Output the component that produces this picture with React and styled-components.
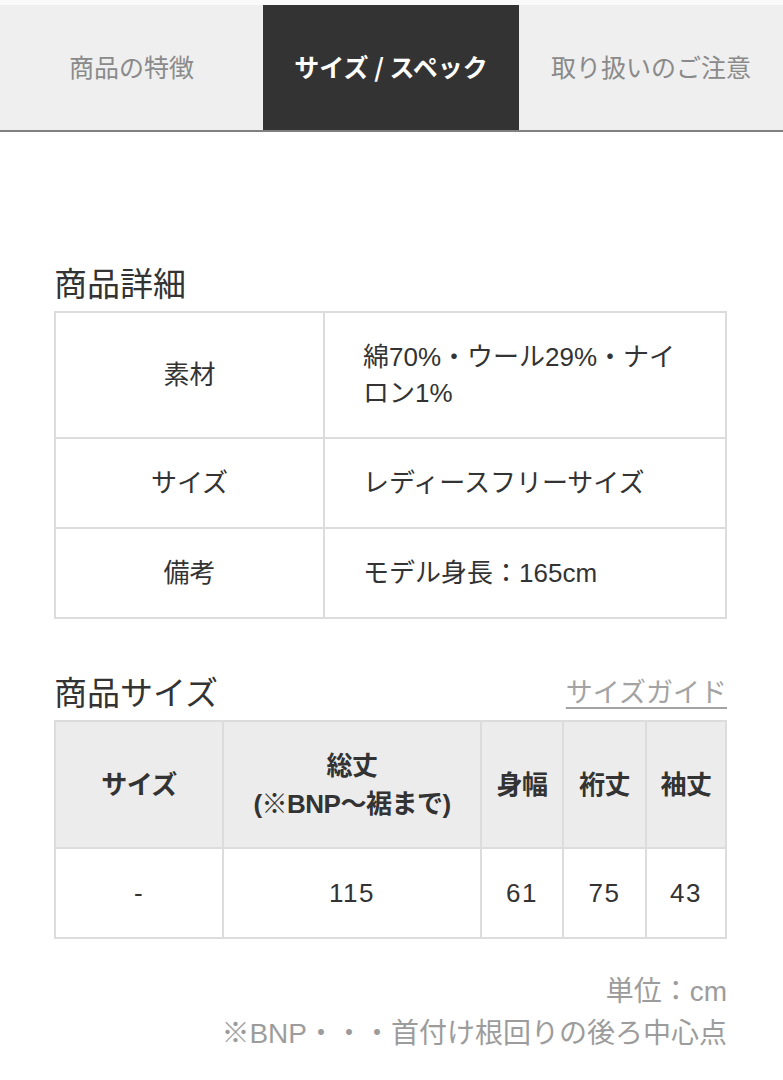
import React from "react";
import styled, { createGlobalStyle } from "styled-components";

const Global = createGlobalStyle`
  html, body { margin: 0; padding: 0; background: #fff; }
  body {
    font-family: "Liberation Sans", "Noto Sans CJK JP", "Noto Sans", sans-serif;
    color: #333;
  }
`;

const Page = styled.div`
  width: 783px;
  padding-top: 5px;
  background: #fafafa;
`;

const TabBar = styled.nav`
  display: grid;
  grid-template-columns: 263px 256px 264px;
  border-bottom: 2px solid #808080;
  background: #efefef;
`;

const Tab = styled.div`
  height: 125px;
  padding-bottom: 3px;
  box-sizing: border-box;
  display: flex;
  align-items: center;
  justify-content: center;
  font-family: "Noto Sans CJK JP", "Liberation Sans", sans-serif;
  font-size: 25px;
  background: ${(p) => (p.$active ? "#333333" : "#efefef")};
  color: ${(p) => (p.$active ? "#ffffff" : "#8a8a8a")};
  font-weight: ${(p) => (p.$active ? 700 : 400)};
`;

const Content = styled.main`
  background: #fff;
  padding: 133px 56px 40px 54px;
`;

const TitleRow = styled.div`
  display: flex;
  align-items: flex-end;
  justify-content: space-between;
  margin-bottom: 6px;
  margin-top: ${(p) => p.$mt || 0}px;
`;

const Title = styled.h2`
  margin: 0;
  font-size: 33px;
  line-height: 40px;
  font-weight: 400;
  color: #333;
`;

const GuideLink = styled.a`
  font-size: 27px;
  line-height: 34px;
  color: #a3a3a3;
  text-decoration: underline;
  text-underline-offset: 5px;
  text-decoration-thickness: 2px;
  margin-bottom: 4px;
`;

const Table = styled.table`
  width: 100%;
  border-collapse: collapse;
  table-layout: fixed;
  font-size: 26px;
  line-height: 36px;
  color: #333;
`;

const Th = styled.th`
  border: 2px solid #dcdcdc;
  background: #ececec;
  font-weight: 700;
  text-align: center;
  padding: 0;
  height: 125px;
  line-height: 38px;
  letter-spacing: -0.5px;
`;

const Label = styled.td`
  border: 2px solid #dcdcdc;
  text-align: center;
  padding: 26px 10px;
`;

const Value = styled.td`
  border: 2px solid #dcdcdc;
  text-align: left;
  padding: 26px 30px 26px 38px;
`;

const Num = styled.td`
  border: 2px solid #dcdcdc;
  text-align: center;
  height: 88px;
  padding: 0;
  letter-spacing: 1.5px;
`;

const Notes = styled.div`
  margin-top: 32px;
  text-align: right;
  font-size: 28px;
  line-height: 42px;
  color: #9c9c9c;
`;

export default function App() {
  const tabs = ["商品の特徴", "サイズ / スペック", "取り扱いのご注意"];
  const details = [
    ["素材", "綿70%・ウール29%・ナイロン1%"],
    ["サイズ", "レディースフリーサイズ"],
    ["備考", "モデル身長：165cm"],
  ];
  return (
    <Page>
      <Global />
      <TabBar>
        {tabs.map((t, i) => (
          <Tab key={t} $active={i === 1}>
            {t}
          </Tab>
        ))}
      </TabBar>
      <Content>
        <TitleRow>
          <Title>商品詳細</Title>
        </TitleRow>
        <Table>
          <colgroup>
            <col style={{ width: "269px" }} />
            <col />
          </colgroup>
          <tbody>
            {details.map(([k, v]) => (
              <tr key={k}>
                <Label>{k}</Label>
                <Value>{v}</Value>
              </tr>
            ))}
          </tbody>
        </Table>

        <TitleRow $mt={55}>
          <Title>商品サイズ</Title>
          <GuideLink href="#">サイズガイド</GuideLink>
        </TitleRow>
        <Table>
          <colgroup>
            <col style={{ width: "168px" }} />
            <col style={{ width: "258px" }} />
            <col style={{ width: "82px" }} />
            <col style={{ width: "83px" }} />
            <col />
          </colgroup>
          <thead>
            <tr>
              <Th>サイズ</Th>
              <Th>
                総丈
                <br />
                (※BNP〜裾まで)
              </Th>
              <Th>身幅</Th>
              <Th>裄丈</Th>
              <Th>袖丈</Th>
            </tr>
          </thead>
          <tbody>
            <tr>
              <Num>-</Num>
              <Num>115</Num>
              <Num>61</Num>
              <Num>75</Num>
              <Num>43</Num>
            </tr>
          </tbody>
        </Table>
        <Notes>
          単位：cm
          <br />
          ※BNP・・・首付け根回りの後ろ中心点
        </Notes>
      </Content>
    </Page>
  );
}
